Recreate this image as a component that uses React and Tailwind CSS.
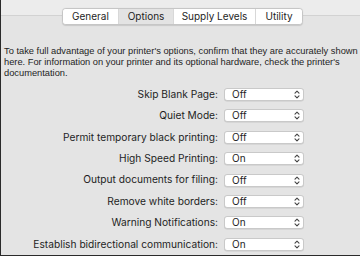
import React from "react";

const rows = [
  ["Skip Blank Page:", "Off"],
  ["Quiet Mode:", "Off"],
  ["Permit temporary black printing:", "Off"],
  ["High Speed Printing:", "On"],
  ["Output documents for filing:", "Off"],
  ["Remove white borders:", "Off"],
  ["Warning Notifications:", "On"],
  ["Establish bidirectional communication:", "On"],
];

function Chevrons() {
  return (
    <svg width="6" height="9" viewBox="0 0 6 9" fill="none" stroke="#444" strokeWidth="1.1" strokeLinecap="round" strokeLinejoin="round">
      <path d="M1 3.2 L3 1.2 L5 3.2" />
      <path d="M1 5.8 L3 7.8 L5 5.8" />
    </svg>
  );
}

export default function App() {
  const tabs = ["General", "Options", "Supply Levels", "Utility"];
  const widths = ["w-[55px]", "w-[55px]", "w-[82px]", "w-[47px]"];
  return (
    <div
      className="relative w-[360px] h-[256px] bg-[#ececec] border-l border-b border-[#2a2a2a] flex flex-col overflow-hidden text-[#1e1e1e]"
      style={{ fontFamily: "Inter, 'Liberation Sans', sans-serif" }}
    >
      <div className="h-[15px] shrink-0" />
      <div className="flex-1 bg-[#e4e4e4] border-t border-[#d2d2d2] pt-[30px] pl-[3px]">
        <p
          className="text-[9.3px] leading-[11px] whitespace-nowrap"
          style={{ fontFamily: "'Liberation Sans', Arial, sans-serif" }}
        >
          To take full advantage of your printer's options, confirm that they are accurately shown
          <br />
          here. For information on your printer and its optional hardware, check the printer's
          <br />
          documentation.
        </p>
        <div className="mt-[9px] flex flex-col gap-[8.4px]">
          {rows.map(([label, val]) => (
            <div key={label} className="flex items-center h-[13px]">
              <div className="w-[214px] text-right text-[10.2px] whitespace-nowrap">{label}</div>
              <div className="ml-[6px] w-[80px] h-[13px] bg-white rounded-[3px] border border-[#c9c9c9] shadow-[0_0.5px_0.5px_rgba(0,0,0,0.12)] flex items-center justify-between pl-[7px] pr-[3px] text-[10px]">
                <span>{val}</span>
                <Chevrons />
              </div>
            </div>
          ))}
        </div>
      </div>
      <div className="absolute left-[61px] top-[8px] h-[17px] flex bg-white border border-[#c6c6c6] rounded-[4px] shadow-[0_0.5px_1px_rgba(0,0,0,0.12)] overflow-hidden">
        {tabs.map((t, i) => (
          <div
            key={t}
            className={`${widths[i]} flex items-center justify-center text-[10px] ${i === 1 ? "bg-[#e3e3e3]" : "bg-white"} ${i > 0 ? "border-l border-[#d8d8d8]" : ""}`}
          >
            {t}
          </div>
        ))}
      </div>
    </div>
  );
}
